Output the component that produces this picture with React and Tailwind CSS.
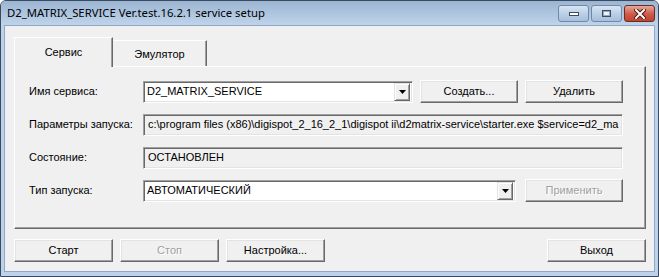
import React from 'react';

const UI = "font-['Liberation_Sans',Arial,sans-serif] text-[11px] leading-none text-black";

function Btn({ children, disabled, className = '' }) {
  return (
    <div
      className={`flex h-[23px] w-[98px] shrink-0 items-center justify-center border border-t-white border-l-white border-r-[#696969] border-b-[#696969] bg-[#f0f0f0] shadow-[inset_-1px_-1px_0_#a0a0a0,inset_1px_1px_0_#e3e3e3] ${
        disabled ? 'text-[#a0a0a0] [text-shadow:1px_1px_0_#fff]' : 'text-black'
      } ${className}`}
    >
      {children}
    </div>
  );
}

function Field({ children, white, className = '' }) {
  return (
    <div
      className={`flex h-[22px] shrink-0 items-center overflow-hidden border border-t-[#a0a0a0] border-l-[#a0a0a0] border-r-white border-b-white shadow-[inset_1px_1px_0_#696969,inset_-1px_-1px_0_#e3e3e3] ${
        white ? 'bg-white' : 'bg-[#f0f0f0]'
      } ${className}`}
    >
      {children}
    </div>
  );
}

function Combo({ value, className = '' }) {
  return (
    <Field white className={`pl-[3px] pr-[2px] ${className}`}>
      <span className="flex-1 whitespace-nowrap">{value}</span>
      <div className="flex h-[18px] w-[16px] items-center justify-center border border-t-[#e3e3e3] border-l-[#e3e3e3] border-r-[#696969] border-b-[#696969] bg-[#f0f0f0] shadow-[inset_1px_1px_0_#fff,inset_-1px_-1px_0_#a0a0a0]">
        <svg width="7" height="4" viewBox="0 0 7 4">
          <polygon points="0,0 7,0 3.5,4" fill="#000" />
        </svg>
      </div>
    </Field>
  );
}

function Row({ label, children }) {
  return (
    <div className="flex h-[23px] items-center">
      <div className="w-[114px] shrink-0">{label}</div>
      {children}
    </div>
  );
}

function CaptionButton({ children, close }) {
  return (
    <div
      className={`flex h-[17px] w-[31px] items-center justify-center rounded-[3px] border ${
        close
          ? 'border-[#6b2a24] bg-gradient-to-b from-[#e3a99b] via-[#cf5e4a] to-[#c0432e]'
          : 'border-[#7189a8] bg-gradient-to-b from-[#d8e5f3] via-[#bcd0e7] to-[#a7bfdc]'
      }`}
    >
      {children}
    </div>
  );
}

export default function App() {
  return (
    <div className={`h-[277px] w-[659px] bg-white ${UI}`}>
      <div className="flex h-full w-full flex-col rounded-t-[6px] border border-[#3b4a5e] bg-[#bcd3eb]">
        {/* Title bar */}
        <div className="flex h-[24px] shrink-0 items-start rounded-t-[5px] bg-gradient-to-b from-[#9bb5d2] to-[#bfd4ea] pl-[6px] pr-[3px]">
          <span className="mt-[5px] font-['Noto_Sans',sans-serif] text-[11.3px] leading-[14px] text-black">
            D2_MATRIX_SERVICE Ver.test.16.2.1 service setup
          </span>
          <div className="ml-auto mt-[4px] flex gap-[2px]">
            <CaptionButton>
              <div className="h-[4px] w-[10px] border border-[#3b4b60] bg-white" />
            </CaptionButton>
            <CaptionButton>
              <div className="h-[7px] w-[9px] border border-[#3b4b60] bg-[#eef3f9] shadow-[inset_0_0_0_1px_#8fa6c4]" />
            </CaptionButton>
            <CaptionButton close>
              <svg width="12" height="10" viewBox="0 0 12 10">
                <path d="M2 1 L10 9 M10 1 L2 9" stroke="#4a1410" strokeWidth="4" strokeLinecap="square" />
                <path d="M2 1 L10 9 M10 1 L2 9" stroke="#fff" strokeWidth="2" strokeLinecap="square" />
              </svg>
            </CaptionButton>
          </div>
        </div>

        {/* Client area */}
        <div className="mx-[3px] mb-[4px] flex flex-1 flex-col border border-[#8ea8c6] bg-[#f0f0f0] pl-[9px] pr-[8px] pt-[11px]">
          {/* Tabs */}
          <div className="flex h-[29px] items-end">
            <div className="relative z-10 -mb-[1px] flex h-[30px] w-[99px] items-center justify-center border-l border-t border-r border-l-white border-t-white border-r-[#696969] bg-[#f0f0f0] pb-[1px] shadow-[inset_-1px_0_0_#a0a0a0]">
              Сервис
            </div>
            <div className="flex h-[26px] w-[94px] items-center justify-center border-t border-r border-t-white border-r-[#696969] bg-[#f0f0f0] pt-[1px] shadow-[inset_-1px_0_0_#a0a0a0]">
              Эмулятор
            </div>
          </div>

          {/* Tab panel */}
          <div className="flex h-[163px] flex-col gap-[10px] border border-t-white border-l-white border-r-[#696969] border-b-[#696969] pl-[14px] pt-[13px] shadow-[inset_-1px_-1px_0_#a0a0a0]">
            <Row label="Имя сервиса:">
              <Combo value="D2_MATRIX_SERVICE" className="w-[270px]" />
              <Btn className="ml-[7px]">Создать...</Btn>
              <Btn className="ml-[7px]">Удалить</Btn>
            </Row>
            <Row label="Параметры запуска:">
              <Field className="w-[480px] pl-[4px]">
                <span className="whitespace-nowrap">
                  c:\program files (x86)\digispot_2_16_2_1\digispot ii\d2matrix-service\starter.exe $service=d2_ma
                </span>
              </Field>
            </Row>
            <Row label="Состояние:">
              <Field className="w-[480px] pl-[4px]">
                <span>ОСТАНОВЛЕН</span>
              </Field>
            </Row>
            <Row label="Тип запуска:">
              <Combo value="АВТОМАТИЧЕСКИЙ" className="w-[373px]" />
              <Btn disabled className="ml-[9px]">Применить</Btn>
            </Row>
          </div>

          {/* Bottom buttons */}
          <div className="mt-[10px] flex gap-[7px]">
            <Btn className="w-[99px]">Старт</Btn>
            <Btn disabled className="w-[99px]">Стоп</Btn>
            <Btn className="w-[99px]">Настройка...</Btn>
            <Btn className="ml-auto w-[99px]">Выход</Btn>
          </div>
        </div>
      </div>
    </div>
  );
}
